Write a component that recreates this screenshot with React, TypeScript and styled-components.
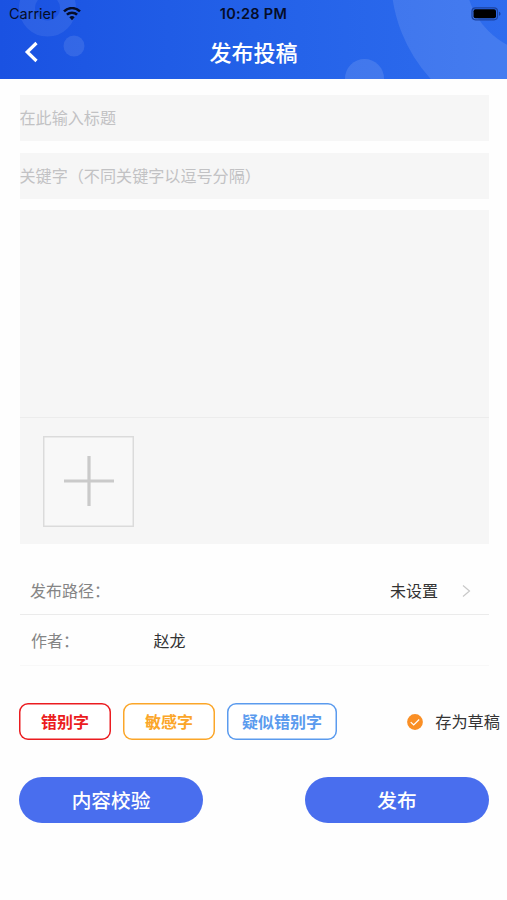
import React from "react";
import styled, { createGlobalStyle } from "styled-components";

const GlobalStyle = createGlobalStyle`
  * { box-sizing: border-box; }
  body {
    margin: 0;
    background: #fff;
    font-family: "Noto Sans CJK SC", sans-serif;
  }
  button, input, textarea { font-family: inherit; border: 0; padding: 0; margin: 0; outline: 0; }
`;

const Screen = styled.div`
  width: 507px;
  height: 900px;
  background: #fefefe;
  overflow: hidden;
  display: flex;
  flex-direction: column;
`;

const Header = styled.header`
  position: relative;
  height: 79px;
  flex: none;
  background: linear-gradient(90deg, #1a52e2 0%, #2361e8 50%, #2e6cee 100%);
  overflow: hidden;
`;

const Decor = styled.svg`
  position: absolute;
  inset: 0;
`;

const StatusBar = styled.div`
  position: relative;
  display: grid;
  grid-template-columns: 1fr auto 1fr;
  align-items: center;
  height: 27px;
  padding: 0 7px 0 9px;
  font: 500 14.5px/27px Inter, sans-serif;
  color: #050d28;
`;

const Carrier = styled.div`
  display: flex;
  align-items: center;
  gap: 6px;
  font-weight: 400;
`;

const Clock = styled.div`
  margin-right: 2px;
  font-weight: 600;
  letter-spacing: 0.3px;
`;

const Battery = styled.svg`
  justify-self: end;
  margin-right: -2px;
`;

const NavBar = styled.div`
  position: relative;
  display: grid;
  grid-template-columns: 60px 1fr 60px;
  align-items: center;
  height: 50px;
`;

const BackButton = styled.button`
  display: flex;
  padding-left: 24px;
  background: none;
`;

const Title = styled.h1`
  margin: 0;
  padding-bottom: 3px;
  text-align: center;
  font-size: 22px;
  line-height: 30px;
  font-weight: 500;
  color: #fff;
`;

const Form = styled.main`
  display: flex;
  flex-direction: column;
  padding: 16px 18px 0 20px;
`;

const Field = styled.input`
  height: 46px;
  margin-bottom: 12px;
  padding-bottom: 2px;
  background: #f6f6f6;
  font-size: 16.1px;
  text-indent: -0.5px;
  &::placeholder { color: #c2c2c4; opacity: 1; }
`;

const Editor = styled.section`
  height: 334px;
  margin-top: -1px;
  background: #f6f6f6;
`;

const Content = styled.textarea`
  display: block;
  width: 100%;
  height: 208px;
  resize: none;
  background: transparent;
  border-bottom: 1px solid #ececec;
`;

const AddPicture = styled.button`
  display: grid;
  place-items: center;
  width: 91px;
  height: 91px;
  margin: 18px 0 0 23px;
  box-shadow: inset 0 0 0 1.5px #dbdbdb;
  background: #f8f8f8;
  svg { margin-bottom: 1px; }
`;

const Row = styled.div<{ $height: number; $line: string; $indent: number; $lift: number }>`
  display: flex;
  align-items: center;
  height: ${(p) => p.$height}px;
  padding: 0 18px ${(p) => p.$lift}px ${(p) => p.$indent}px;
  border-bottom: 1px solid ${(p) => p.$line};
  font-size: 16px;
  color: #333;
`;

const Rows = styled.div`
  margin-top: 23px;
`;

const Label = styled.span`
  width: 122.5px;
  color: #858585;
`;

const Value = styled.span<{ $end?: boolean }>`
  margin-left: ${(p) => (p.$end ? "auto" : 0)};
`;

const Arrow = styled.svg`
  margin-left: 24px;
  position: relative;
  top: 1px;
`;

const Tags = styled.div`
  display: flex;
  align-items: center;
  gap: 12px;
  margin: 37px -11px 0 -1px;
`;

const Tag = styled.button<{ $color: string; $wide?: boolean }>`
  width: ${(p) => (p.$wide ? 110 : 92)}px;
  height: 37px;
  padding-bottom: 1px;
  box-shadow: inset 0 0 0 1.5px ${(p) => p.$color};
  border-radius: 9px;
  background: #fff;
  color: ${(p) => p.$color};
  font-size: 16px;
  font-weight: 700;
  white-space: nowrap;
`;

const Draft = styled.label`
  display: flex;
  align-items: center;
  gap: 12px;
  margin-left: auto;
  font-size: 16.2px;
  line-height: 24px;
  color: #333;
`;

const DraftText = styled.span`
  padding-bottom: 2px;
`;

const Actions = styled.div`
  display: flex;
  justify-content: space-between;
  margin: 37px 0 0 -1px;
`;

const Action = styled.button`
  width: 184px;
  height: 46px;
  padding-bottom: 2px;
  border-radius: 23px;
  background: #496eee;
  color: #fff;
  font-size: 19.7px;
  font-weight: 500;
`;

export default function App() {
  return (
    <Screen>
      <GlobalStyle />
      <Header>
        <Decor width="507" height="79" fill="#fff">
          <circle cx="47.5" cy="8" r="20.5" fill="none" stroke="#fff" strokeWidth="16" opacity=".08" />
          <circle cx="74" cy="46" r="10.5" opacity=".1" />
          <circle cx="364.5" cy="78.5" r="19.5" opacity=".12" />
          <circle cx="542" cy="-23" r="113.5" fill="none" stroke="#fff" strokeWidth="75" opacity=".11" />
        </Decor>
        <StatusBar>
          <Carrier>
            Carrier
            <svg width="18" height="14" viewBox="0 0 18 14" fill="none" stroke="#050d28" strokeWidth="2.5">
              <path d="M1 4.3a11.6 11.6 0 0 1 16 0" />
              <path d="M3.9 7.7a7.4 7.4 0 0 1 10.2 0" />
              <path d="M6.3 10.2a4 4 0 0 1 5.4 0L9 13.2z" fill="#050d28" stroke="none" />
            </svg>
          </Carrier>
          <Clock>10:28 PM</Clock>
          <Battery width="31" height="14" viewBox="0 0 31 14">
            <rect x="1" y=".8" width="25.5" height="12" rx="3.5" fill="none" stroke="#1c439f" strokeWidth="1.2" />
            <rect x="2.5" y="2.3" width="22.5" height="9" rx="2" fill="#000" />
            <path d="M28 4.8c2 .5 2 3.6 0 4z" fill="#1c439f" />
          </Battery>
        </StatusBar>
        <NavBar>
          <BackButton aria-label="返回">
            <svg width="15" height="22" viewBox="0 0 15 22" fill="none" stroke="#fff" strokeWidth="3.2">
              <path d="M12.5 2 3.2 11l9.3 9" />
            </svg>
          </BackButton>
          <Title>发布投稿</Title>
        </NavBar>
      </Header>
      <Form>
        <Field placeholder="在此输入标题" />
        <Field placeholder="关键字（不同关键字以逗号分隔）" />
        <Editor>
          <Content />
          <AddPicture aria-label="添加图片">
            <svg width="50" height="50" stroke="#cacaca" strokeWidth="3.2">
              <path d="M25 0v50M0 25h50" />
            </svg>
          </AddPicture>
        </Editor>
        <Rows>
          <Row $height={48} $line="#ebebeb" $indent={10} $lift={2}>
            <Label>发布路径：</Label>
            <Value $end>未设置</Value>
            <Arrow width="9" height="14" fill="none" stroke="#c8c8c8" strokeWidth="1.2">
              <path d="m1 1.5 6.5 5.5L1 12.5" />
            </Arrow>
          </Row>
          <Row $height={51} $line="#f8f8f8" $indent={11} $lift={0}>
            <Label>作者：</Label>
            <Value>赵龙</Value>
          </Row>
        </Rows>
        <Tags>
          <Tag $color="#eb1c20">错别字</Tag>
          <Tag $color="#fba629">敏感字</Tag>
          <Tag $color="#5b9bee" $wide>疑似错别字</Tag>
          <Draft>
            <svg width="16" height="16" viewBox="0 0 16 16">
              <circle cx="8" cy="8" r="7.9" fill="#fa8f25" />
              <path d="m3.7 8.1 3 2.9 5.5-5.5" fill="none" stroke="#fff" strokeWidth="1.2" />
            </svg>
            <DraftText>存为草稿</DraftText>
          </Draft>
        </Tags>
        <Actions>
          <Action>内容校验</Action>
          <Action>发布</Action>
        </Actions>
      </Form>
    </Screen>
  );
}
